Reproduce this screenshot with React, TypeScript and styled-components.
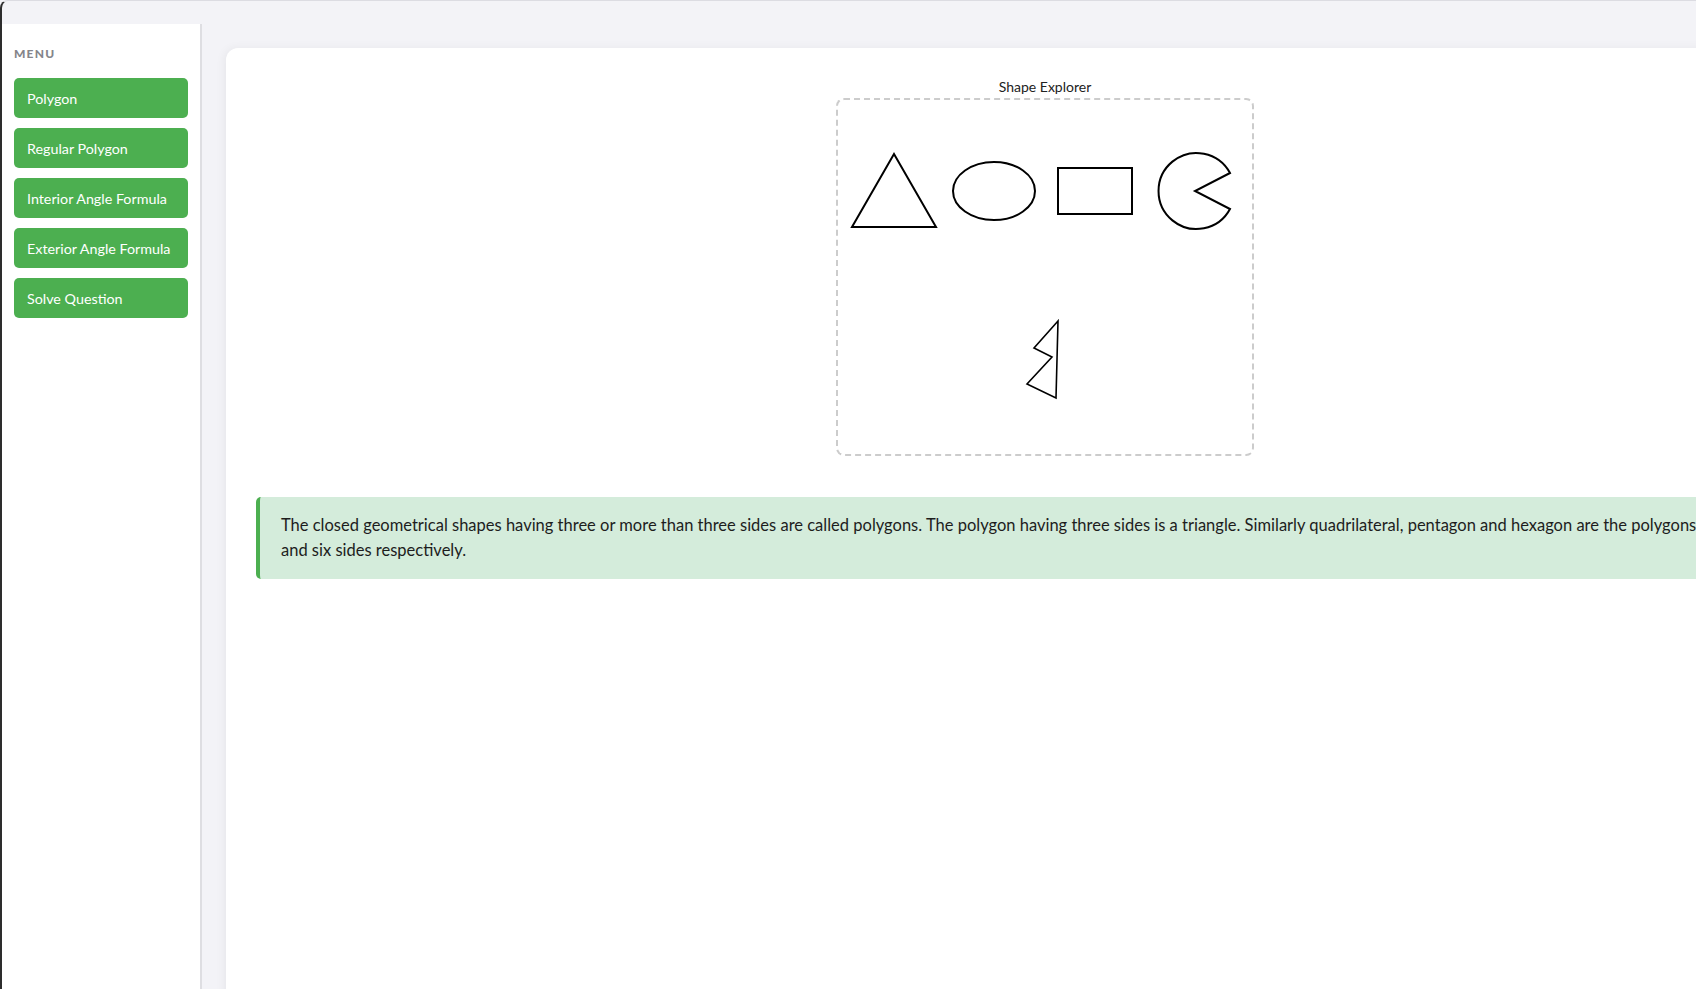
import * as React from 'react'
import styled, { createGlobalStyle } from 'styled-components'

const GlobalStyle = createGlobalStyle`
  html, body {
    margin: 0;
    padding: 0;
    overflow: hidden;
    background: #f3f3f7;
    font-family: Lato, 'Open Sans', sans-serif;
  }
`

const AppFrame = styled.div`
  display: flex;
  min-height: 100vh;
  box-sizing: border-box;
  padding-top: 23px;
  border-top: 1px solid #dcdce2;
  border-left: 2px solid #2d2d2d;
  border-top-left-radius: 8px;
  background: #f3f3f7;
`

const Sidebar = styled.aside`
  flex: none;
  width: 200px;
  box-sizing: border-box;
  padding: 22px 12px;
  background: #fff;
  border-right: 2px solid #dedee2;
  display: flex;
  flex-direction: column;
  gap: 10px;
`

const MenuTitle = styled.div`
  font-size: 12px;
  font-weight: 900;
  letter-spacing: 1.2px;
  text-transform: uppercase;
  color: #85858a;
  line-height: 16px;
  margin-bottom: 6px;
`

const MenuButton = styled.button<{ $active?: boolean }>`
  display: block;
  width: 100%;
  height: 40px;
  padding: 0 13px;
  text-align: left;
  border: none;
  border-radius: 5px;
  background: ${props => (props.$active ? '#43a047' : '#4caf50')};
  color: #fff;
  font-family: Lato, 'Open Sans', sans-serif;
  font-size: 14.3px;
  cursor: pointer;
`

const Main = styled.main`
  flex: none;
  padding: 24px 0 0 24px;
`

const Card = styled.section`
  width: 1638px;
  min-height: 960px;
  box-sizing: border-box;
  padding: 29px 30px;
  background: #fff;
  border-radius: 12px;
  box-shadow: -2px 0 10px rgba(0, 0, 0, 0.05);
  display: flex;
  flex-direction: column;
  align-items: center;
`

const ExplorerLabel = styled.div`
  font-size: 14px;
  line-height: 19px;
  color: #222;
  margin-bottom: 2px;
`

const ExplorerBox = styled.div`
  width: 418px;
  height: 358px;
  box-sizing: border-box;
  border: 2px dashed #cccccc;
  border-radius: 8px;
`

const InfoPanel = styled.div`
  align-self: stretch;
  margin-top: 41px;
  padding: 16px 8px 16px 21px;
  background: #d4ecdb;
  border-left: 4px solid #4caf50;
  border-radius: 5px;
  font-size: 16.5px;
  line-height: 25px;
  color: #1d1d1d;
`

const menuItems = [
  'Polygon',
  'Regular Polygon',
  'Interior Angle Formula',
  'Exterior Angle Formula',
  'Solve Question',
]

const ShapeCanvas = () => (
  <svg width="414" height="354" viewBox="0 0 414 354" fill="none" stroke="#000" strokeWidth="2">
    <polygon points="56,54 14,127 98,127" />
    <ellipse cx="156" cy="91" rx="41" ry="29" />
    <rect x="220" y="68" width="74" height="46" />
    <path d="M392,73 L357,91 L392,109 A38,38 0 1 1 392,73 Z" strokeLinejoin="miter" />
    <polygon points="220,221 196,248 214,257 189,284 218,298" strokeWidth="1.6" />
  </svg>
)

export default function App() {
  return (
    <>
      <GlobalStyle />
      <AppFrame>
        <Sidebar>
          <MenuTitle>Menu</MenuTitle>
          {menuItems.map(item => (
            <MenuButton key={item}>{item}</MenuButton>
          ))}
        </Sidebar>
        <Main>
          <Card>
            <ExplorerLabel>Shape Explorer</ExplorerLabel>
            <ExplorerBox>
              <ShapeCanvas />
            </ExplorerBox>
            <InfoPanel>
              The closed geometrical shapes having three or more than three sides are called
              polygons. The polygon having three sides is a triangle. Similarly quadrilateral,
              pentagon and hexagon are the polygons having four, five and six sides respectively.
            </InfoPanel>
          </Card>
        </Main>
      </AppFrame>
    </>
  )
}
